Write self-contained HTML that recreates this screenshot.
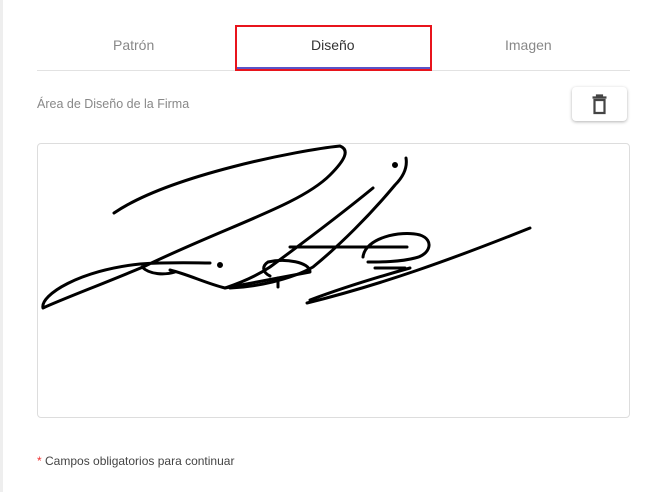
<!DOCTYPE html>
<html><head><meta charset="utf-8"><style>
html,body{margin:0;padding:0;width:660px;height:492px;background:#fff;overflow:hidden;font-family:"Liberation Sans",sans-serif;}
.lb{position:absolute;left:0;top:0;width:3px;height:492px;background:#eee;}
.tab{position:absolute;top:37px;font-size:14px;color:#888;}
.line{position:absolute;left:37px;top:70px;width:593px;height:1px;background:#e2e2e2;}
.sel{position:absolute;left:235px;top:25px;width:193px;height:42px;border:2px solid #e8141c;}
.ul{position:absolute;left:237px;top:67px;width:193px;height:2px;background:#5a55c8;}
.lbl{position:absolute;left:37px;top:97px;font-size:12.5px;color:#888;}
.btn{position:absolute;left:572px;top:87px;width:55px;height:34px;border-radius:4px;background:#fff;box-shadow:0 1px 3px rgba(0,0,0,.3);}
.pad{position:absolute;left:37px;top:143px;width:591px;height:273px;border:1px solid #ddd;border-radius:4px;}
.req{position:absolute;left:37px;top:454px;font-size:12px;color:#444;}
</style></head><body>
<div class="lb"></div>
<div class="tab" style="left:113px">Patrón</div>
<div class="tab" style="left:311px;color:#333">Diseño</div>
<div class="tab" style="left:505px">Imagen</div>
<div class="line"></div>
<div class="ul"></div>
<div class="sel"></div>
<div class="lbl">Área de Diseño de la Firma</div>
<div class="btn"><svg width="55" height="34" viewBox="0 0 55 34"><path d="M20.5 10.5h14M25 10.5v-2h5v2M22.5 13h10v13h-10z" fill="none" stroke="#444" stroke-width="2.2"/></svg></div>
<div class="pad"></div>
<svg style="position:absolute;left:0;top:0" width="660" height="492" viewBox="0 0 660 492" fill="none" stroke="#000" stroke-width="3" stroke-linecap="round" stroke-linejoin="round">
<path d="M114 213 C170 175 300 150 340 146 C350 150 345 160 330 175 C300 205 230 225 143 267 C100 285 60 300 43 308 C40 295 80 270 140 264 C170 262 195 263 210 263"/>
<path d="M142 267 C150 275 165 275 175 272 M170 270 C190 275 205 283 225 288 L310 272 C310 262 285 258 268 262 C262 266 262 272 270 276"/>
<path d="M373 188 C340 215 300 245 270 267 C255 277 240 283 225 288"/>
<path d="M406 158 C408 170 400 180 395 185 C370 215 340 245 313 267 C290 280 255 287 230 288"/>
<path d="M290 247 L407 247"/>
<path d="M363 257 C365 238 400 230 420 235 C435 240 430 255 415 258 C400 262 380 262 368 262 M375 268 L405 268"/>
<path d="M307 303 C380 285 450 260 530 228"/>
<path d="M310 300 C350 285 385 275 410 268"/>
<circle cx="220" cy="265" r="1.5" fill="#000"/><circle cx="395" cy="165" r="1.5" fill="#000"/>
<path d="M278 278 v9"/>
</svg>
<div class="req"><span style="color:#e33">*</span> Campos obligatorios para continuar</div>
</body></html>
